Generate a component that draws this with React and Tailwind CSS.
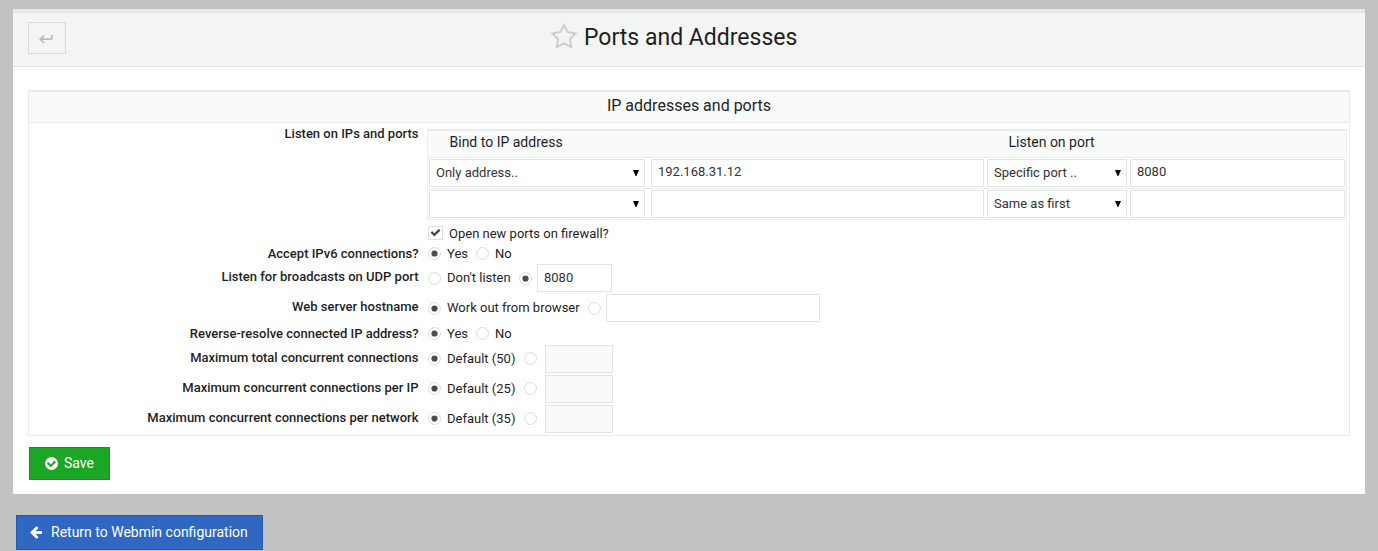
function StarIcon({ className }) {
  return (
    <svg viewBox="0 0 1792 1792" fill="currentColor" className={className} aria-hidden="true">
      <path d="M1201 1004l306-297-422-62-189-382-189 382-422 62 306 297-73 421 378-199 377 199zm527-357q0 22-26 48l-363 354 86 500q1 7 1 20 0 50-41 50-19 0-40-12l-449-236-449 236q-22 12-40 12-21 0-31.500-14.500t-10.500-35.500q0-6 2-20l86-500-364-354q-25-27-25-48 0-37 56-46l502-73 225-455q19-41 49-41t49 41l225 455 502 73q56 9 56 46z" />
    </svg>
  );
}

function CheckCircleIcon({ className }) {
  return (
    <svg viewBox="0 0 1792 1792" fill="currentColor" className={className} aria-hidden="true">
      <path d="M1412 734q0-28-18-46l-91-90q-19-19-45-19t-45 19l-408 407-226-226q-19-19-45-19t-45 19l-91 90q-18 18-18 46 0 27 18 45l362 362q19 19 45 19 27 0 46-19l543-543q18-18 18-45zm252 162q0 209-103 385.500t-279.500 279.500-385.500 103-385.500-103-279.500-279.500-103-385.500 103-385.500 279.500-279.500 385.500-103 385.500 103 279.500 279.500 103 385.500z" />
    </svg>
  );
}

function ArrowLeftIcon({ className }) {
  return (
    <svg viewBox="0 0 1792 1792" fill="currentColor" className={className} aria-hidden="true">
      <path d="M1664 896v128q0 53-32.500 90.500t-84.500 37.500h-704l293 294q38 36 38 90t-38 90l-75 76q-37 37-90 37-52 0-91-37l-651-652q-37-37-37-90 0-52 37-91l651-650q38-38 91-38 52 0 90 38l75 74q38 38 38 91t-38 91l-293 293h704q52 0 84.500 37.500t32.500 90.500z" />
    </svg>
  );
}

function CheckIcon({ className }) {
  return (
    <svg viewBox="0 0 1792 1792" fill="currentColor" className={className} aria-hidden="true">
      <path d="M1671 566q0 40-28 68l-724 724-136 136q-28 28-68 28t-68-28l-136-136-362-362q-28-28-28-68t28-68l136-136q28-28 68-28t68 28l294 295 656-657q28-28 68-28t68 28l136 136q28 28 28 68z" />
    </svg>
  );
}

function BackIcon({ className }) {
  return (
    <svg viewBox="0 0 14 10" fill="none" stroke="currentColor" strokeWidth="1.700" className={className} aria-hidden="true">
      <path d="M13 1v3q0 1.200-1.200 1.200H1.500M5 1.300L1.300 5.200 5 9" />
    </svg>
  );
}

function Radio({ on }) {
  return (
    <span className="flex size-[13px] shrink-0 items-center justify-center rounded-full border border-[#dcdcdc] bg-white">
      {on && (
        <svg viewBox="0 0 11 11" className="size-[11px] text-[#4f4b4b]" fill="currentColor" aria-hidden="true">
          <circle cx="5.500" cy="5.500" r="3.100" />
        </svg>
      )}
    </span>
  );
}

function Field({ className, children }) {
  return (
    <div className={`flex h-[28px] shrink-0 items-center border border-[#e3e5e5] pl-[6px] text-[#333] ${className}`}>
      {children}
    </div>
  );
}

function Select({ className, children }) {
  return (
    <div className={`flex h-[28px] shrink-0 items-center justify-between border border-[#e3e5e5] bg-white pr-[5px] pl-[6px] text-[#333] ${className}`}>
      <span>{children}</span>
      <svg viewBox="0 0 6 6" className="size-[6px] text-black" fill="currentColor" aria-hidden="true">
        <path d="M0 0h6L3.400 6h-0.800z" />
      </svg>
    </div>
  );
}

function Row({ label, className, labelClass = "", children }) {
  return (
    <div className={`flex items-center ${className}`}>
      <div className={`w-[390px] shrink-0 pr-[0.500px] text-right font-medium ${labelClass}`}>{label}</div>
      <div className="ml-[9px] flex items-center">{children}</div>
    </div>
  );
}

function YesNo() {
  return (
    <>
      <Radio on />
      <span className="ml-[6px] w-[29px]">Yes</span>
      <Radio />
      <span className="ml-[6px]">No</span>
    </>
  );
}

function Limit({ count }) {
  return (
    <>
      <div className="flex items-center pb-px">
        <Radio on />
        <span className="ml-[6px] w-[76.500px] whitespace-nowrap">Default ({count})</span>
        <Radio />
      </div>
      <Field className="ml-[8.500px] w-[68px] bg-[#fafafa]" />
    </>
  );
}

export default function App() {
  return (
    <div className="h-[551px] overflow-hidden bg-[#c1c3c2] pt-[9px] font-['Roboto',sans-serif] text-[13px] leading-[20px] text-[#1f1f1f]">
      <main className="mr-[13px] ml-[13px] h-[485px] bg-white">
        <header className="flex h-[58px] items-start border-t-[4px] border-b border-t-[#e7e9e8] border-b-[#e0e2e1] bg-[#f3f5f4] pl-[15px]">
          <button className="mt-[9px] flex h-[32px] w-[38px] items-center justify-center border border-[#d9dbda] pt-px pr-[2px] text-[#b9bbba]">
            <BackIcon className="h-[10px] w-[14px]" />
          </button>
          <h1 className="mt-[10px] ml-[484px] flex items-center text-[23px] leading-[30px]">
            <StarIcon className="relative -top-px mr-[6px] size-[28px] text-[#cccecd]" />
            Ports and Addresses
          </h1>
        </header>

        <section className="mt-[23px] ml-[15px] h-[346px] w-[1322px] border border-t-2 border-[#e9ebea]">
          <h2 className="flex h-[31px] items-center justify-center border-b border-[#e9ebea] bg-[#f9fafa] pb-[2px] text-[16px]">
            IP addresses and ports
          </h2>
          <div className="flex h-[120px] items-start">
            <div className="w-[390px] shrink-0 pt-px pr-[0.500px] text-right font-medium">Listen on IPs and ports</div>
            <div className="ml-[8px] pt-[6px]">
              <div className="h-[91px] w-[920px] border border-t-2 border-[#ecedee]">
                <div className="flex h-[27px] items-center border-b border-[#ecedee] bg-[#f9fafa] pb-[4px] pl-[21.500px] text-[14px]">
                  <span className="w-[559px]">Bind to IP address</span>
                  <span>Listen on port</span>
                </div>
                <div className="flex h-[31px] items-center border-b border-[#ecedee] pl-px">
                  <Select className="w-[216px]">Only address..</Select>
                  <Field className="ml-[6px] w-[333px] pb-[2px]">192.168.31.12</Field>
                  <Select className="ml-[3px] w-[140px]">Specific port ..</Select>
                  <Field className="ml-[3px] w-[215px] pb-[2px]">8080</Field>
                </div>
                <div className="flex h-[30px] items-center pl-px">
                  <Select className="w-[216px]" />
                  <Field className="ml-[6px] w-[333px]" />
                  <Select className="ml-[3px] w-[140px]">Same as first</Select>
                  <Field className="ml-[3px] w-[215px]" />
                </div>
              </div>
              <div className="mt-[4px] flex items-center pl-px">
                <span className="mr-[6px] mb-[2px] flex h-[14px] w-[15px] items-center justify-center border border-[#e0e0e0]">
                  <CheckIcon className="mb-px size-[11px] text-[#4a4a4a]" />
                </span>
                Open new ports on firewall?
              </div>
            </div>
          </div>
          <Row label="Accept IPv6 connections?" className="h-[21px]">
            <YesNo />
          </Row>
          <Row label="Listen for broadcasts on UDP port" className="h-[28px]" labelClass="pb-[2px]">
            <Radio />
            <span className="ml-[6px] w-[71.500px]">Don't listen</span>
            <Radio on />
            <Field className="ml-[5.500px] w-[75px]">8080</Field>
          </Row>
          <Row label="Web server hostname" className="mt-px h-[30px]" labelClass="pb-[2px]">
            <Radio on />
            <span className="ml-[6px] w-[140.500px]">Work out from browser</span>
            <Radio />
            <Field className="ml-[5.500px] w-[214px]" />
          </Row>
          <Row label="Reverse-resolve connected IP address?" className="h-[21px]">
            <YesNo />
          </Row>
          <Row label="Maximum total concurrent connections" className="h-[30px]" labelClass="pb-[2px]">
            <Limit count={50} />
          </Row>
          <Row label="Maximum concurrent connections per IP" className="h-[30px]" labelClass="pb-[2px]">
            <Limit count={25} />
          </Row>
          <Row label="Maximum concurrent connections per network" className="h-[30px]" labelClass="pb-[2px]">
            <Limit count={35} />
          </Row>
        </section>

        <button className="mt-[11px] ml-[16px] flex h-[33px] w-[81px] items-center border border-[#158d20] bg-[#1ca626] pb-px pl-[14px] text-[14px] text-white">
          <CheckCircleIcon className="mr-[5px] size-[15px]" />
          Save
        </button>
      </main>

      <button className="mt-[21px] ml-[16px] flex h-[35px] w-[247px] items-center border border-[#2858ab] bg-[#3067c3] pb-[2px] pl-[12px] text-[14px] text-white">
        <ArrowLeftIcon className="mr-[8px] size-[14px]" />
        Return to Webmin configuration
      </button>
    </div>
  );
}
